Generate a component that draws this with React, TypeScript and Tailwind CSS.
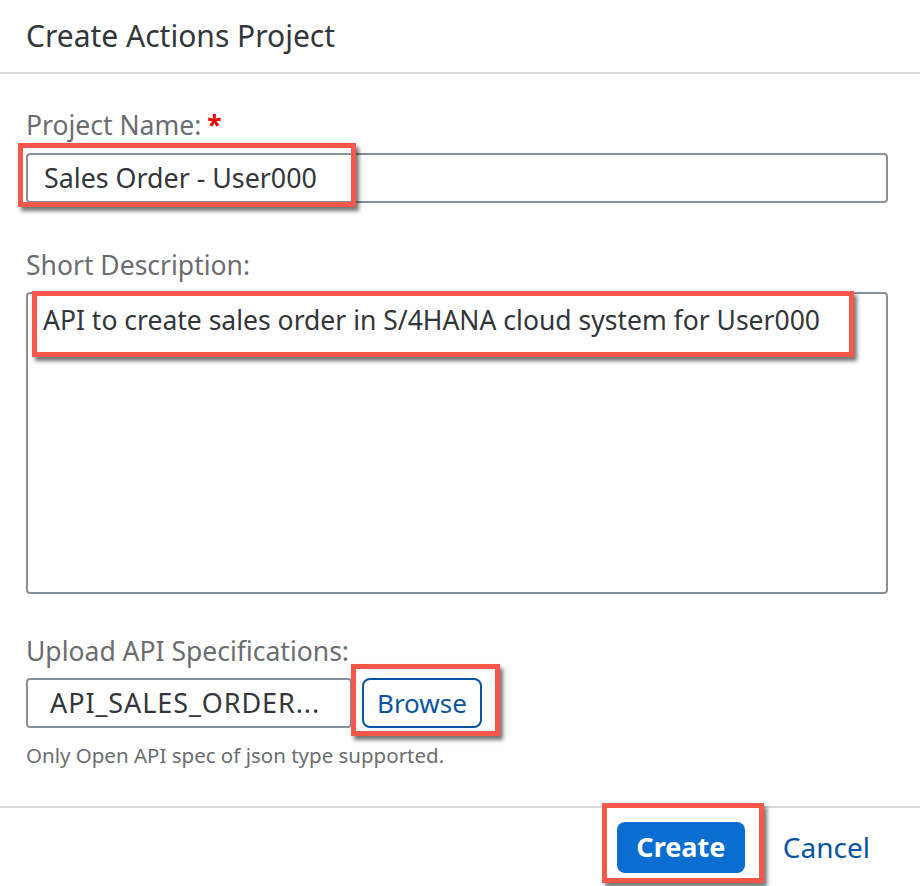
import React from 'react';

const font = { fontFamily: '"Noto Sans", "Liberation Sans", Arial, sans-serif' };

function Highlight({ className }: { className: string }) {
    return (
        <div
            className={`pointer-events-none absolute border-[5px] border-[#f5574b] shadow-[3px_4px_4px_rgba(0,0,0,0.55)] ${className}`}
        />
    );
}

export default function App() {
    return (
        <div className="w-[920px] h-[886px] bg-white text-[#32363a] overflow-hidden" style={font}>
            <div className="h-[74px] flex items-center px-[26px] border-b-2 border-[#d9d9d9]">
                <h1 className="text-[30px] leading-none">Create Actions Project</h1>
            </div>

            <div className="px-[26px] pr-[32px]">
                <label className="block mt-[36px] text-[26.5px] leading-[30px] text-[#6a6d70]">
                    Project Name:<span className="text-[#e00] ml-[6px] font-bold">*</span>
                </label>
                <div className="relative mt-[13px]">
                    <div className="h-[50px] border-2 border-[#89919a] rounded-[4px] flex items-center px-[16px] text-[26.8px]">
                        Sales Order - User000
                    </div>
                    <Highlight className="-left-[8px] -top-[10px] w-[338px] h-[64px]" />
                </div>

                <label className="block mt-[47px] text-[26.5px] leading-[30px] text-[#6a6d70]">Short Description:</label>
                <div className="relative mt-[12px]">
                    <div className="h-[302px] border-2 border-[#89919a] rounded-[4px] px-[15px] pt-[8px] text-[26.5px] leading-[36px]">
                        API to create sales order in S/4HANA cloud system for User000
                    </div>
                    <Highlight className="left-[6px] -top-[1px] w-[822px] h-[66px]" />
                </div>

                <label className="block mt-[42px] text-[26.5px] leading-[30px] text-[#6a6d70]">Upload API Specifications:</label>
                <div className="relative mt-[12px] flex items-center gap-[10px]">
                    <div className="w-[326px] h-[50px] border-2 border-[#89919a] rounded-[4px] flex items-center px-[22px] text-[27px] tracking-[0.9px] whitespace-nowrap">
                        API_SALES_ORDER...
                    </div>
                    <button className="h-[50px] px-[13px] border-2 border-[#0854a0] rounded-[8px] text-[#0854a0] text-[26px]">
                        Browse
                    </button>
                    <Highlight className="left-[325px] -top-[14px] w-[149px] h-[72px]" />
                </div>
                <p className="mt-[14px] text-[20.5px] leading-[26px] text-[#6a6d70]">Only Open API spec of json type supported.</p>
            </div>

            <div className="mt-[38px] border-t-2 border-[#d9d9d9] h-[80px] flex items-center justify-end pr-[50px] gap-[38px]">
                <div className="relative">
                    <button className="w-[128px] h-[51px] rounded-[8px] bg-[#0a6ed1] text-white font-bold text-[27px]">Create</button>
                    <Highlight className="-left-[15px] -top-[19px] w-[162px] h-[80px]" />
                </div>
                <button className="text-[#0854a0] text-[28px]">Cancel</button>
            </div>
        </div>
    );
}
